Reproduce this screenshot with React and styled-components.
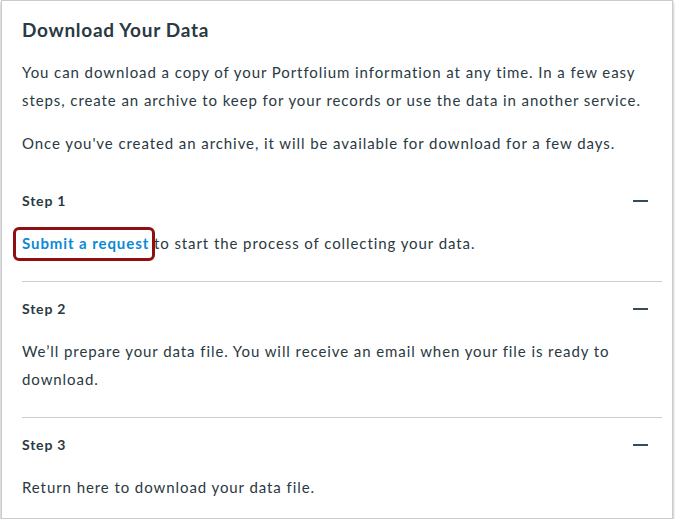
import React from 'react'
import styled, { createGlobalStyle } from 'styled-components'

const GlobalStyle = createGlobalStyle`
   body {
      margin: 0;
      background: #ffffff;
      font-family: 'Lato', 'Liberation Sans', sans-serif;
   }
`

function App() {
   const steps = [
      {
         title: 'Step 1',
         body: (
            <>
               <LinkMark>
                  <Link href="#">Submit a request</Link>
               </LinkMark>{' '}
               to start the process of collecting your data.
            </>
         ),
      },
      {
         title: 'Step 2',
         body: 'We\u2019ll prepare your data file. You will receive an email when your file is ready to download.',
      },
      {
         title: 'Step 3',
         body: 'Return here to download your data file.',
      },
   ]
   return (
      <>
         <GlobalStyle />
         <Panel>
            <Title>Download Your Data</Title>
            <Intro>
               <Text>
                  You can download a copy of your Portfolium information at any
                  time. In a few easy steps, create an archive to keep for your
                  records or use the data in another service.
               </Text>
               <Text>
                  Once you've created an archive, it will be available for
                  download for a few days.
               </Text>
            </Intro>
            {steps.map((step, i) => (
               <Step key={step.title} $last={i === steps.length - 1}>
                  <StepHeader>
                     <StepTitle>{step.title}</StepTitle>
                     <Collapse aria-label="Collapse" />
                  </StepHeader>
                  <Text>{step.body}</Text>
               </Step>
            ))}
         </Panel>
      </>
   )
}

export default App

const Panel = styled.div`
   box-sizing: border-box;
   width: 672px;
   height: 519px;
   margin-left: 1px;
   padding: 17px 10px 0 20px;
   border: 1px solid #c9ccce;
   box-shadow: 0 2px 3px rgba(0, 0, 0, 0.35);
   background: #fff;
   color: #2a3942;
   overflow: hidden;
`

const Title = styled.h2`
   margin: 0 0 16px;
   font-size: 19px;
   font-weight: 700;
   line-height: 24px;
   letter-spacing: 0.7px;
`

const Intro = styled.div`
   display: flex;
   flex-direction: column;
   gap: 15px;
   margin-bottom: 17px;
`

const Text = styled.p`
   margin: 0;
   font-size: 15px;
   line-height: 28px;
   letter-spacing: 0.92px;
`

const Step = styled.section`
   padding: 17px 0 ${(p) => (p.$last ? '0' : '24px')};
   border-bottom: ${(p) => (p.$last ? 'none' : '1px solid #c7cdd1')};
`

const StepHeader = styled.div`
   display: flex;
   align-items: center;
   justify-content: space-between;
   padding-right: 14px;
   margin-bottom: 18px;
`

const StepTitle = styled.h3`
   margin: 0;
   font-size: 14px;
   font-weight: 700;
   line-height: 20px;
   letter-spacing: 0.8px;
`

const Collapse = styled.span`
   display: block;
   width: 15px;
   height: 2px;
   background: #394b58;
`

const LinkMark = styled.span`
   position: relative;
   &::after {
      content: '';
      position: absolute;
      left: -9px;
      right: -6px;
      top: -7px;
      bottom: -9px;
      border: 3px solid #8f0f12;
      border-radius: 6px;
   }
`

const Link = styled.a`
   color: #0c89d6;
   font-weight: 700;
   text-decoration: none;
`
